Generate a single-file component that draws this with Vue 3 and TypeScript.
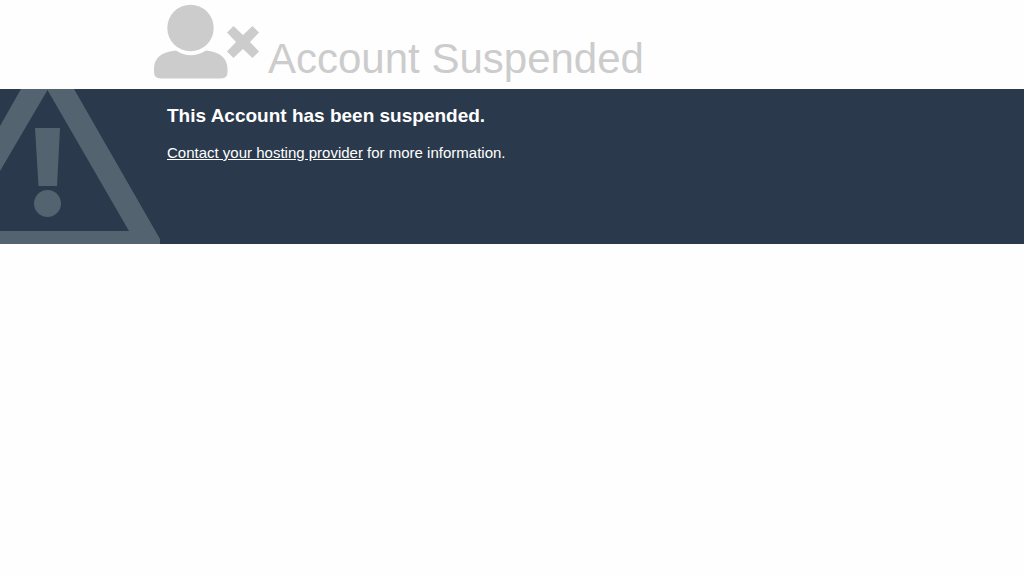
<script setup lang="ts">
const title: string = 'Account Suspended'
const reason: string = 'This Account has been suspended.'
</script>

<template>
  <div class="page">
    <header class="header">
      <svg class="user-icon" viewBox="0 0 106 76" width="106" height="76" aria-hidden="true">
        <circle cx="36.5" cy="25" r="23.2" />
        <path d="M22 47.5Q36.5 57 52 47.5C66 49 73.5 55 73.5 66V69Q73.5 75.5 67 75.5H7Q0 75.5 0 69V66C0 55 7 49 22 47.5Z" />
        <path d="M73 29.5 79.5 23 89 32 98.5 23 105 29.500 96 39 105 48.5 98.5 55 89 46 79.5 55 73 48.5 82 39Z" />
      </svg>
      <h1>{{ title }}</h1>
    </header>
    <main class="banner">
      <svg class="warning" viewBox="0 0 160 155" width="160" height="155" aria-hidden="true">
        <path fill-rule="evenodd" d="M21 0H74L160 150V155H0V142H129L47.5 1 0 82V37Z" />
        <path d="M35 39H60L57 97H38.5Z" />
        <circle cx="47.5" cy="114.5" r="13.5" />
      </svg>
      <section class="message">
        <h2>{{ reason }}</h2>
        <p><a href="#">Contact your hosting provider</a> for more information.</p>
      </section>
    </main>
  </div>
</template>

<style>
body {
  margin: 0;
  background: #fefefe;
}
</style>

<style scoped>
.page {
  font-family: "Liberation Sans", Arial, sans-serif;
}
.header {
  display: flex;
  align-items: flex-end;
  gap: 8px;
  padding: 3px 16px 10px 154px;
  color: #cccccc;
}
.user-icon {
  flex: none;
  fill: currentColor;
}
h1 {
  margin: 0;
  font-size: 42px;
  line-height: 40px;
  font-weight: 400;
}
.banner {
  display: flex;
  align-items: flex-start;
  gap: 7px;
  background: #2a3a4c;
  color: #ffffff;
}
.warning {
  flex: none;
  fill: #536370;
}
.message {
  padding: 16px 16px 16px 0;
}
h2 {
  margin: 0 0 16px;
  font-size: 19px;
  line-height: 22px;
}
p {
  margin: 0;
  font-size: 15px;
  line-height: 20px;
}
a {
  color: inherit;
}
</style>
